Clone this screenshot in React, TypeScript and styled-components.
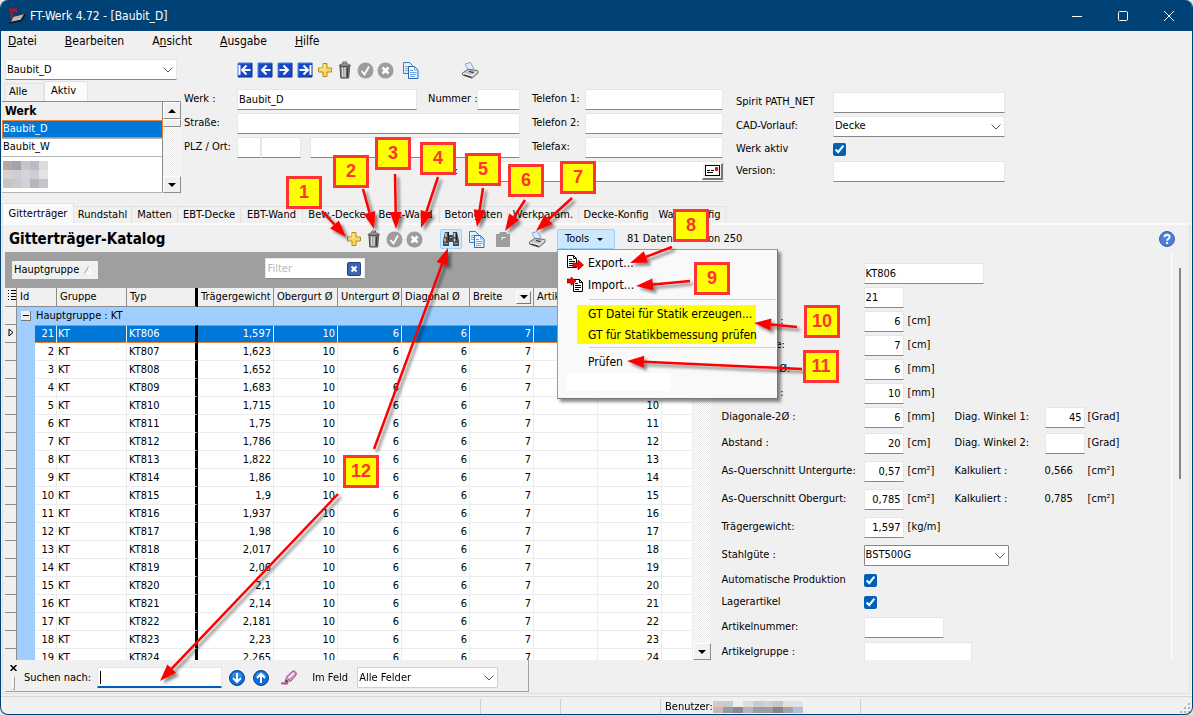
import React from "react";
import styled, { createGlobalStyle, css } from "styled-components";

const font = `"DejaVu Sans Condensed", "DejaVu Sans", "Noto Sans", sans-serif`;
const navy = "#004275";
const face = "#f0f0f0";

const GlobalStyle = createGlobalStyle`
  *, *::before, *::after { box-sizing: border-box; }
  body { margin: 0; background: #e4e4e4; }
  body, button, input, select, table { font-family: ${font}; font-size: 11px; line-height: 14px; color: #000; }
  button { border: 0; padding: 0; background: none; }
`;

/* ---------- window frame ---------- */

const Window = styled.div`
  position: relative;
  display: flex;
  flex-direction: column;
  height: 100vh;
  min-height: 600px;
  overflow: hidden;
  background: ${face};
  border: 1px solid ${navy};
  border-top: 0;
  border-radius: 8px;
`;

const TitleBar = styled.header`
  display: flex;
  flex: none;
  align-items: center;
  height: 31px;
  padding-left: 7px;
  background: ${navy};
  color: #fff;
  font-size: 12px;
`;

const WindowTitle = styled.span`
  flex: 1;
  padding-left: 4px;
`;

const CaptionButton = styled.button`
  display: grid;
  place-items: center;
  width: 46px;
  height: 31px;
`;

const MenuBar = styled.nav`
  display: flex;
  flex: none;
  gap: 28px;
  height: 21px;
  padding: 1px 7px 3px;
`;

const MenuLink = styled.button`
  font-size: 12px;
  line-height: 16px;
`;

/* ---------- shared controls ---------- */

const fieldBox = css`
  height: 21px;
  border: 1px solid #e6e6e6;
  border-bottom-color: #868686;
  border-radius: 1px;
  background: #fff;
  outline: 0;
`;

const Field = styled.input<{ $w: number; $right?: boolean }>`
  ${fieldBox}
  flex: none;
  width: ${(p) => p.$w}px;
  padding: 0 2px 0 1px;
  text-align: ${(p) => (p.$right ? "right" : "left")};
`;

const SelectFrame = styled.span<{ $w: number; $edge?: string }>`
  position: relative;
  flex: none;
  width: ${(p) => p.$w}px;
  height: 21px;
  select {
    ${fieldBox}
    width: 100%;
    padding: 0 20px 0 1px;
    appearance: none;
    ${(p) => p.$edge && `border-color: ${p.$edge};`}
  }
  svg {
    position: absolute;
    right: 3px;
    top: 7px;
    pointer-events: none;
  }
`;

const Check = styled.input.attrs({ type: "checkbox" })`
  width: 13px;
  height: 13px;
  margin: 0;
  accent-color: #005fb8;
`;

const Label = styled.label<{ $w?: number }>`
  flex: none;
  white-space: nowrap;
  ${(p) => p.$w && `width: ${p.$w}px;`}
`;

const IconButton = styled.button<{ $gap?: number; $on?: boolean }>`
  display: grid;
  flex: none;
  place-items: center;
  width: 16px;
  height: 20px;
  margin-left: ${(p) => p.$gap ?? 4}px;
  ${(p) =>
    p.$on &&
    `width: 22px; background: #cce8ff; border: 1px solid #99d1ff; border-radius: 2px;`}
`;

/* ---------- plant header ---------- */

const PlantArea = styled.section`
  display: flex;
  flex: none;
  height: 150px;
  padding-left: 1px;
`;

const PlantList = styled.div`
  width: 182px;
  padding: 7px 3px 0 0;
`;

const ComboLine = styled.div`
  display: flex;
  padding-left: 3px;
`;

const SmallTabs = styled.div`
  display: flex;
  align-items: flex-end;
  height: 21px;
  padding-left: 2px;
`;

const SmallTab = styled.button<{ $active?: boolean }>`
  width: ${(p) => (p.$active ? 44 : 40)}px;
  height: ${(p) => (p.$active ? 20 : 18)}px;
  padding: 0 0 2px ${(p) => (p.$active ? 6 : 4)}px;
  text-align: left;
  background: ${(p) => (p.$active ? "#fafafa" : face)};
  border: 1px solid #e2e2e2;
  border-bottom: 0;
`;

const ListBox = styled.div`
  display: flex;
  height: 92px;
  border-top: 1px solid #8c8c8c;
`;

const ListTable = styled.table`
  flex: 1;
  border-collapse: collapse;
  th {
    height: 18px;
    padding: 0 3px;
    text-align: left;
    font-size: 12px;
    background: ${face};
    border-bottom: 1px solid #8c8c8c;
    border-right: 1px solid #8c8c8c;
  }
  td {
    height: 18px;
    padding: 0 1px;
    background: #fff;
    border-bottom: 1px solid #b4b4b4;
    border-right: 1px solid #8c8c8c;
  }
`;

const SelectedCell = styled.td`
  && {
    background: #0078d7;
    color: #fff;
    outline: 1px solid #f08030;
    outline-offset: -1px;
  }
`;

const HiddenCell = styled.td`
  && {
    padding-top: 4px;
    vertical-align: top;
  }
`;

const Mosaic = styled.span<{ $cols: number; $cell: number; $h: number }>`
  display: grid;
  width: max-content;
  grid-template-columns: repeat(${(p) => p.$cols}, ${(p) => p.$cell}px);
  i {
    height: ${(p) => p.$h}px;
  }
`;

const ScrollTrack = styled.div<{ $w: number }>`
  display: flex;
  flex: none;
  flex-direction: column;
  justify-content: space-between;
  width: ${(p) => p.$w}px;
  background: repeating-conic-gradient(#e9e9e9 0 25%, #fff 0 50%) 0 0 / 2px 2px;
`;

const ScrollButton = styled.button`
  display: grid;
  place-items: center;
  height: 17px;
  background: ${face};
  border: 1px solid #fff;
  border-right-color: #8c8c8c;
  border-bottom-color: #8c8c8c;
`;

const ScrollThumb = styled.div`
  height: 8px;
  margin-bottom: auto;
  background: ${face};
  border: 1px solid #fff;
  border-right-color: #8c8c8c;
  border-bottom-color: #8c8c8c;
`;

const PlantForm = styled.div`
  width: 540px;
`;

const PlantTools = styled.div`
  display: flex;
  height: 35px;
  padding: 8px 0 0 49px;
`;

const FormLine = styled.div`
  display: flex;
  align-items: center;
  height: 24px;
`;

const Gap = styled.span<{ $w: number }>`
  flex: none;
  width: ${(p) => p.$w}px;
`;

const MailLine = styled(FormLine)`
  justify-content: flex-end;
  gap: 9px;
`;

const MailBox = styled.span`
  ${fieldBox}
  display: flex;
  align-items: center;
  width: 257px;
  input {
    flex: 1;
    min-width: 0;
    border: 0;
    outline: 0;
  }
`;

const MailButton = styled.button`
  width: 21px;
  height: 17px;
  background: ${face};
  border: 1px solid #fff;
  border-right: 2px solid #777;
  border-bottom: 2px solid #777;
  display: grid;
  place-items: center;
`;

const SpiritForm = styled.div`
  padding: 38px 0 0 12px;
`;

const SpiritLine = styled(FormLine)`
  height: 22px;
`;

/* ---------- main tabs and catalogue ---------- */

const Tabs = styled.div`
  display: flex;
  flex: none;
  align-items: flex-end;
  height: 21px;
  padding-left: 1px;
`;

const Tab = styled.button<{ $w: number; $active?: boolean }>`
  flex: none;
  width: ${(p) => p.$w}px;
  height: ${(p) => (p.$active ? 20 : 17)}px;
  white-space: nowrap;
  border: 1px solid #e2e2e2;
  border-left-width: ${(p) => (p.$active ? 1 : 0)}px;
  border-bottom: 0;
  background: ${(p) => (p.$active ? "#fafafa" : face)};
`;

const Panel = styled.main`
  display: flex;
  flex: 1;
  flex-direction: column;
  min-height: 0;
  margin: 0 2px 2px 1px;
  border: 1px solid #dfdfdf;
  border-top: 2px solid #fafafa;
`;

const PanelHead = styled.div`
  display: flex;
  flex: none;
  align-items: center;
  height: 27px;
  padding: 1px 14px 0 6px;
`;

const Heading = styled.h1`
  flex: none;
  width: 333px;
  margin: 0;
  font-size: 15px;
  line-height: 20px;
`;

const RecordCount = styled.span`
  flex: 1;
  padding-left: 12px;
`;

const ToolsHost = styled.div`
  position: relative;
  margin-left: 12px;
`;

const ToolsButton = styled.button`
  display: flex;
  align-items: center;
  justify-content: space-between;
  width: 58px;
  height: 20px;
  padding: 0 11px 0 7px;
  background: #cce8ff;
  border: 1px solid #99d1ff;
  border-radius: 2px;
`;

const Popup = styled.div`
  position: absolute;
  z-index: 2;
  left: 0;
  top: 20px;
  width: 221px;
  height: 150px;
  padding: 2px 1px;
  background: #f9f9f9;
  border: 1px solid #9a9a9a;
  border-right-color: #777;
  border-bottom-color: #777;
  box-shadow: 3px 3px 3px rgba(0, 0, 0, 0.45);
`;

const PopupItem = styled.button`
  display: flex;
  align-items: center;
  width: 100%;
  height: 22px;
  font-size: 12px;
  white-space: nowrap;
`;

const PopupIcon = styled.span`
  width: 29px;
  height: 17px;
  padding-left: 4px;
`;

const PopupRule = styled.hr`
  height: 1px;
  margin: 3px 0 3px 30px;
  border: 0;
  background: #cfcfcf;
`;

const Marked = styled.div`
  display: flex;
  flex-direction: column;
  gap: 4px;
  width: 179px;
  height: 39px;
  margin: 5px 0 3px 18px;
  background: #ff0;
  button {
    height: 17px;
    padding-left: 11px;
  }
`;

const PopupBlank = styled.div`
  width: 104px;
  height: 18px;
  margin: 0 8px;
  background: #fff;
`;

const Split = styled.div`
  display: grid;
  flex: 1;
  grid-template-columns: 705fr 461fr 17px;
  min-height: 0;
  padding-left: 2px;
`;

const GridSide = styled.div`
  display: flex;
  flex-direction: column;
  min-width: 0;
  min-height: 0;
`;

const GroupBand = styled.div`
  display: flex;
  flex: none;
  align-items: flex-start;
  justify-content: space-between;
  height: 36px;
  padding: 6px 346px 0 7px;
  background: #9f9f9f;
`;

const GroupChip = styled.button`
  display: flex;
  align-items: center;
  justify-content: space-between;
  width: 86px;
  height: 18px;
  margin-top: 3px;
  padding: 0 5px 0 2px;
  background: ${face};
`;

const FilterBox = styled.span`
  ${fieldBox}
  display: flex;
  align-items: center;
  width: 100px;
  padding: 0 2px;
  input {
    flex: 1;
    min-width: 0;
    padding: 0;
    border: 0;
    outline: 0;
  }
  input::placeholder {
    color: #b9b9b9;
  }
`;

const GridBody = styled.div`
  display: flex;
  flex: 1;
  min-height: 0;
  overflow: hidden;
  background: #fff;
`;

const TableFrame = styled.div`
  flex: 1;
  min-width: 0;
  overflow: hidden;
`;

const DataTable = styled.table`
  width: 100%;
  table-layout: fixed;
  border-collapse: separate;
  border-spacing: 0;
  th,
  td {
    height: 18px;
    padding: 0 2px;
    overflow: hidden;
    white-space: nowrap;
  }
  th {
    height: 19px;
    padding: 0 0 0 3px;
    text-align: left;
    font-weight: normal;
    background: ${face};
    border-right: 1px solid #8c8c8c;
    border-bottom: 1px solid #8c8c8c;
  }
  td {
    text-align: right;
    border-right: 1px solid #ececec;
    border-bottom: 1px solid #ececec;
  }
`;

const Marker = styled.td`
  && {
    padding: 0;
    text-align: center;
    background: ${face};
    border-right: 1px solid #8c8c8c;
    border-bottom: 1px solid #8c8c8c;
  }
`;

const Indent = styled.td`
  && {
    background: #a0cfff;
    border: 0;
  }
`;

const GroupCell = styled.td`
  && {
    padding: 0 4px;
    text-align: left;
    background: #a0cfff;
    border: 0;
  }
`;

const GroupLabel = styled.span`
  display: flex;
  align-items: center;
  gap: 5px;
`;

const ExpandBox = styled.button`
  display: grid;
  place-items: center;
  width: 10px;
  height: 10px;
  background: ${face};
  border-right: 1px solid #777;
  border-bottom: 1px solid #777;
`;

const Row = styled.tr<{ $selected?: boolean }>`
  td:nth-child(4),
  td:nth-child(5) {
    text-align: left;
    padding-left: 1px;
  }
  td:nth-child(5) {
    padding-left: 2px;
    border-right: 3px solid #000;
  }
  ${(p) =>
    p.$selected &&
    css`
      td:nth-child(n + 3) {
        color: #fff;
        background: #0078d7;
        border-top: 1px solid #f08030;
        border-bottom-color: #f08030;
      }
    `}
`;

const FixedHead = styled.th`
  && {
    border-right: 3px solid #000;
  }
`;

const HeadFlex = styled.span`
  display: flex;
  align-items: center;
  justify-content: space-between;
  padding-right: 2px;
`;

const DropButton = styled.button`
  display: grid;
  place-items: center;
  width: 15px;
  height: 13px;
  border: 1px solid #fff;
  border-right-color: #777;
  border-bottom-color: #777;
`;

/* ---------- detail form ---------- */

const Detail = styled.form`
  min-width: 0;
  min-height: 0;
  padding: 9px 0 0 11px;
  overflow: hidden;
  border-right: 1px solid #fff;
`;

const DetailLine = styled.div<{ $h?: number }>`
  display: grid;
  grid-template-columns: 142px 44px 47px 90px 43px 1fr;
  align-items: center;
  height: ${(p) => p.$h ?? 24}px;
  white-space: nowrap;
`;

const Figure = styled.output`
  text-align: left;
`;

const SideScroll = styled.div`
  padding: 16px 0 0 7px;
`;

const SideThumb = styled.div`
  width: 2px;
  height: 211px;
  background: #858585;
`;

/* ---------- search and status ---------- */

const SearchBar = styled.div`
  display: flex;
  flex: none;
  align-items: center;
  width: 524px;
  height: 32px;
  margin: 0 0 1px 2px;
  padding-top: 4px;
  border-right: 1px solid #a0a0a0;
  border-bottom: 1px solid #a0a0a0;
`;

const Grip = styled.div`
  display: flex;
  flex-direction: column;
  align-items: center;
  gap: 5px;
  width: 16px;
  height: 26px;
  margin-right: 3px;
`;

const GripBar = styled.span`
  width: 3px;
  height: 14px;
  border: 1px solid #fff;
  border-right-color: #a0a0a0;
  border-bottom-color: #a0a0a0;
`;

const SearchField = styled(Field)`
  margin-left: 6px;
  border-bottom: 2px solid #005fb8;
  caret-color: transparent;
  &:focus {
    background: linear-gradient(#000, #000) 2px 3px / 1px 13px no-repeat #fff;
  }
`;

const StatusBar = styled.footer`
  display: flex;
  flex: none;
  height: 18px;
  padding-top: 2px;
  border-top: 1px solid #d7d7d7;
`;

const StatusCell = styled.div<{ $w?: number }>`
  display: flex;
  align-items: center;
  ${(p) => (p.$w ? `width: ${p.$w}px; border-right: 1px solid #d0d0d0;` : "flex: 1; justify-content: flex-end; align-items: flex-end;")}
  padding: 1px 0 0 4px;
`;

/* ---------- callouts ---------- */

const Callouts = styled.div`
  position: absolute;
  z-index: 3;
  inset: 0 0 0 -1px;
  pointer-events: none;
  svg {
    position: absolute;
    inset: 0;
    width: 100%;
    height: 100%;
  }
`;

const Badge = styled.span<{ $x: number; $y: number }>`
  position: absolute;
  left: ${(p) => p.$x}px;
  top: ${(p) => p.$y}px;
  width: 36px;
  height: 33px;
  border: 3px solid #ff3333;
  background: #ff0;
  color: #ff3333;
  font: bold 18px/26px "Liberation Sans", sans-serif;
  text-align: center;
`;

/* ---------- icons ---------- */

const Chevron = () => (
  <svg width="12" height="8" viewBox="0 0 12 8">
    <path d="M1.5 1.5 6 6l4.500-4.500" fill="none" stroke="#555" />
  </svg>
);
const Tri = ({ up = false }: { up?: boolean }) => (
  <svg width="8" height="4" viewBox="0 0 8 4">
    <path d={up ? "M0 4h8L4 0z" : "M0 0h8L4 4z"} fill="#000" />
  </svg>
);
const SmallTri = () => (
  <svg width="6" height="3" viewBox="0 0 6 3">
    <path d="M0 0h6L3 3z" fill="#000" />
  </svg>
);
const NavIcon = ({ kind }: { kind: "first" | "prev" | "next" | "last" }) => {
  const flip = kind === "next" || kind === "last";
  return (
    <svg width="16" height="16" viewBox="0 0 16 16">
      <rect x="1" y="1" width="14" height="14" fill="#1648c8" />
      <path d="M1 15V1h14" fill="none" stroke="#4f86ea" />
      <path d="M15 1v14H1" fill="none" stroke="#0a2c86" />
      <g transform={flip ? "matrix(-1 0 0 1 16 0)" : undefined} stroke="#fff" fill="none" strokeWidth="2">
        <path d="M13.500 8H5M9.500 3.500 5 8l4.500 4.500" />
        {(kind === "first" || kind === "last") && <path d="M2.500 3v10" />}
      </g>
    </svg>
  );
};
const PlusIcon = () => (
  <svg width="16" height="16" viewBox="0 0 16 16">
    <path d="M6 1.500h4V6h4.500v4H10v4.500H6V10H1.500V6H6z" fill="#f7dc5a" stroke="#b98a1c" />
    <path d="M7 2.500V7H2.500" fill="none" stroke="#fff6b8" />
  </svg>
);
const TrashIcon = () => (
  <svg width="16" height="18" viewBox="0 0 16 18">
    <path d="M3 5.500h9.500l-.8 11.500H3.800z" fill="#8a8a8a" stroke="#4a4a4a" />
    <path d="M5.500 6.500l.3 9.500M8 6.500v9.500" stroke="#e4e4e4" strokeWidth="1.200" />
    <path d="M10.500 6.500l-.3 9.500" stroke="#333" strokeWidth="1.400" />
    <path d="M2 5C2.500 2 13 2 13.500 5z" fill="#b5b5b5" stroke="#555" />
    <path d="M6 2.500V1h3.500v1.500" fill="none" stroke="#555" />
  </svg>
);
const DotIcon = ({ ok = false }: { ok?: boolean }) => (
  <svg width="17" height="17" viewBox="0 0 17 17">
    <circle cx="8.500" cy="8.500" r="8" fill="#9d9d9d" />
    <path d={ok ? "M4.500 9l3 3.500L12 4.500" : "M5.500 5.500l6 6M11.500 5.500l-6 6"} fill="none" stroke="#fff" strokeWidth={ok ? 1.8 : 2.6} />
  </svg>
);
const CopyIcon = () => (
  <svg width="16" height="17" viewBox="0 0 16 17">
    <path d="M.5.5h6l3 3v8h-9z" fill="#e6f1fc" stroke="#3b78c4" />
    <path d="M2 4.500h4M2 6.500h5M2 8.500h4" stroke="#7aa9e0" />
    <path d="M5.500 4.500h6l3.500 3.500v8.500H5.500z" fill="#f2f8ff" stroke="#2c68b8" />
    <path d="M11.500 4.500V8h3.500M7 8.500h3M7 10.500h6.500M7 12.500h6.500M7 14.500h5" fill="none" stroke="#6fa2de" />
  </svg>
);
const PasteIcon = () => (
  <svg width="16" height="16" viewBox="0 0 16 16">
    <path d="M1 3h3l1-2h6l1 2h3v13H1z" fill="#9d9d9d" />
    <path d="M7 6.500h3.500M7 6v3" stroke="#f3f3f3" fill="none" />
  </svg>
);
const PrinterIcon = () => (
  <svg width="17" height="17" viewBox="0 0 17 17">
    <path d="M3 2 8.500.5l3.500 6-5.500 2z" fill="#dcebfb" stroke="#7fa9dc" />
    <path d="M.5 11 5.500 7.500 16 8.500V11l-6 5.200L.5 13z" fill="#c4c4c4" stroke="#666" />
    <path d="M1 11.500l9 2.300 5.500-4.800" fill="none" stroke="#fafafa" />
    <path d="M2 13l7.500 2.300M7 9.500l4.500 1.200" stroke="#333" strokeWidth="1.200" />
  </svg>
);
const BinocularsIcon = () => (
  <svg width="18" height="16" viewBox="0 0 18 16">
    <path d="M3 1h4v3h4V1h4l2 9v5h-6v-4H7v4H1v-5z" fill="#4a4a4a" />
    <path d="M4 2v4M3 7.500v3M12.500 2v4M12.500 7.500v3" stroke="#d6d6d6" strokeWidth="1.500" />
    <path d="M2 12.500h4M12 12.500h4M7.500 6.500h3" stroke="#9a9a9a" />
    <path d="M6.500 1v8M14.500 2v7" stroke="#1e1e1e" />
  </svg>
);
const CloseSquare = () => (
  <svg width="14" height="14" viewBox="0 0 14 14">
    <rect x=".5" y=".5" width="13" height="13" rx="1" fill="#3a64b4" stroke="#20407e" />
    <path d="M4.500 4.500l5 5M9.500 4.500l-5 5" stroke="#fff" strokeWidth="2" />
  </svg>
);
const HelpIcon = () => (
  <svg width="16" height="16" viewBox="0 0 16 16">
    <circle cx="8" cy="8" r="7.500" fill="#4a7fd4" stroke="#3564b4" />
    <path d="M5.500 6.200C5.500 3 10.600 3 10.600 6c0 1.700-2.500 1.800-2.500 3.700" fill="none" stroke="#fff" strokeWidth="1.900" />
    <rect x="7.100" y="11" width="2" height="2" fill="#fff" />
  </svg>
);
const RoundArrow = ({ up = false }: { up?: boolean }) => (
  <svg width="16" height="16" viewBox="0 0 16 16">
    <circle cx="8" cy="8" r="7.500" fill="#0d6fd6" stroke="#083f96" />
    <path d="M2.500 6.500C4 .8 12 .8 13.500 6.500" fill="#5aa9f2" opacity=".6" />
    <path d={up ? "M8 13V4M4 8l4-4 4 4" : "M8 3v9M4 8l4 4 4-4"} fill="none" stroke="#fff" strokeWidth="2" />
  </svg>
);
const MarkerPen = () => (
  <svg width="16" height="16" viewBox="0 0 16 16">
    <path d="M0 13.500c3-1 4 1 7-.5" fill="none" stroke="#d23a9c" strokeWidth="2" />
    <path d="M3.500 12.500 4.500 8.500l4 3.500z" fill="#555" />
    <path d="M5 7.500 11 1.500c2.500-1.500 5 1 4 3.500L9.500 11.500z" fill="#dd94c6" stroke="#8c4a7c" />
    <path d="M7.500 8 13 3" stroke="#fff" strokeWidth="1.300" />
  </svg>
);
const CraneIcon = () => (
  <svg width="18" height="17" viewBox="0 0 18 17">
    <path d="M5 9.500l12-3-4 7-11 2.500z" fill="#b8b8b8" stroke="#333" />
    <path d="M1 16l12-2.500 4-6" fill="none" stroke="#111" strokeWidth="1.500" />
    <path d="M3.500 11V2M1 2.500h7V5M4 5l3-2" fill="none" stroke="#c01020" strokeWidth="2" />
  </svg>
);
const SheetIcon = ({ incoming = false }: { incoming?: boolean }) => (
  <svg width="17" height="16" viewBox="0 0 17 16">
    <g transform={incoming ? "translate(6 2)" : "translate(0 0)"}>
      <path d="M.5.5h6l3 3v9h-9z" fill="#fff" stroke="#000" />
      <path d="M6.500.5v3h3M2 4.500h3M2 6.500h6M2 8.500h6M2 10.500h4" fill="none" stroke="#000" />
    </g>
    <path d={incoming ? "M0 2h4V0l5 4-5 4.500V6H0z" : "M6 8h5V5l5.500 5-5.500 5v-3H6z"} fill="#f00" stroke="#600" strokeWidth=".6" />
  </svg>
);
const MailIcon = () => (
  <svg width="15" height="11" viewBox="0 0 15 11">
    <rect x=".5" y=".5" width="14" height="10" fill="#fff" stroke="#000" />
    <path d="M2 5.500h3M6 5.500h3M2 7.500h6" stroke="#000" />
    <rect x="10" y="2" width="3" height="4" rx="1" fill="#f00" />
  </svg>
);

/* ---------- data ---------- */

const weights = ["1,597", "1,623", "1,652", "1,683", "1,715", "1,75", "1,786", "1,822", "1,86", "1,9", "1,937", "1,98", "2,017", "2,06", "2,1", "2,14", "2,181", "2,23", "2,265"];
const girders = weights.map((weight, i) => ({
  id: i === 0 ? 21 : i + 1,
  typ: `KT8${String(i + 6).padStart(2, "0")}`,
  weight,
  height: i + 6,
}));

const tabs: [string, number][] = [
  ["Gitterträger", 72], ["Rundstahl", 58], ["Matten", 46], ["EBT-Decke", 63], ["EBT-Wand", 62], ["Bew.-Decke", 69],
  ["Bew.-Wand", 68], ["Betongüten", 68], ["Werkparam.", 71], ["Decke-Konfig", 75], ["Wand-Konfig", 72],
];

const badges = [
  [286, 176], [333, 155], [375, 137], [420, 142], [465, 153], [508, 164],
  [560, 161], [673, 209], [694, 262], [804, 305], [803, 350], [343, 455],
];

const arrows = [
  [322, 211, 346, 237], [363, 189, 374, 229], [395, 174, 396, 229], [438, 177, 421, 228], [483, 188, 477, 227],
  [525, 200, 505, 231], [572, 198, 536, 231], [672, 247, 630, 263], [690, 281, 636, 286], [797, 327, 754, 323],
  [802, 369, 627, 361], [374, 449, 448, 248], [338, 494, 160, 681],
];

const Arrow = ({ at: [x1, y1, x2, y2] }: { at: number[] }) => {
  const len = Math.hypot(x2 - x1, y2 - y1);
  const ux = (x2 - x1) / len;
  const uy = (y2 - y1) / len;
  const bx = x2 - ux * 17;
  const by = y2 - uy * 17;
  return (
    <g>
      <line x1={x1} y1={y1} x2={bx} y2={by} stroke="#f00" strokeWidth="2.500" />
      <path d={`M${x2} ${y2}L${bx - uy * 6} ${by + ux * 6}L${bx + uy * 6} ${by - ux * 6}z`} fill="#f00" />
    </g>
  );
};

const hiddenName = ["#b4a8a4", "#a2a2a8", "#c4c6ca", "#bcb8c4", "#d8dcdc", "#dccfcb", "#cccfd4", "#d4d4dc", "#cfcdd6", "#e2e4e4", "#c8c4c4", "#c9c9cb", "#cfd2dc", "#b4b6be", "#c4c6cc"];
const hiddenUser = ["#d8c8c4", "#c4ccd4", "#eeeeee", "#dcdcd8", "#c8ccd2", "#d4d0d0", "#c4c8cc", "#e6dfda", "#dde4ee", "#cbb8b2", "#9a9a9e", "#8c8890", "#b8b4b8", "#9c9ca4", "#a09ca0", "#8a8488", "#a4a4a8", "#b8bcd0"];

type LineProps = { id: string; label: string; value: string; unit?: string; h?: number; children?: React.ReactNode };
const NumberLine = ({ id, label, value, unit, h, children }: LineProps) => (
  <DetailLine $h={h}>
    <Label htmlFor={id}>{label}</Label>
    <Field id={id} $w={40} $right defaultValue={value} />
    <span>{unit}</span>
    {children}
  </DetailLine>
);

export default function App() {
  return (
    <>
      <GlobalStyle />
      <Window>
        <TitleBar>
          <CraneIcon />
          <WindowTitle>FT-Werk 4.72 - [Baubit_D]</WindowTitle>
          <CaptionButton aria-label="Minimieren">
            <svg width="10" height="10"><path d="M0 5.500h10" stroke="#fff" /></svg>
          </CaptionButton>
          <CaptionButton aria-label="Maximieren">
            <svg width="10" height="10"><rect x=".5" y=".5" width="9" height="9" rx="1" fill="none" stroke="#fff" /></svg>
          </CaptionButton>
          <CaptionButton aria-label="Schließen">
            <svg width="10" height="10"><path d="M0 0l10 10M10 0 0 10" stroke="#fff" /></svg>
          </CaptionButton>
        </TitleBar>

        <MenuBar>
          <MenuLink><u>D</u>atei</MenuLink>
          <MenuLink><u>B</u>earbeiten</MenuLink>
          <MenuLink>A<u>n</u>sicht</MenuLink>
          <MenuLink><u>A</u>usgabe</MenuLink>
          <MenuLink><u>H</u>ilfe</MenuLink>
        </MenuBar>

        <PlantArea>
          <PlantList>
            <ComboLine>
              <SelectFrame $w={172}>
                <select aria-label="Werk wählen"><option>Baubit_D</option></select>
                <Chevron />
              </SelectFrame>
            </ComboLine>
            <SmallTabs>
              <SmallTab>Alle</SmallTab>
              <SmallTab $active>Aktiv</SmallTab>
            </SmallTabs>
            <ListBox>
              <ListTable>
                <thead><tr><th>Werk</th></tr></thead>
                <tbody>
                  <tr><SelectedCell>Baubit_D</SelectedCell></tr>
                  <tr><td>Baubit_W</td></tr>
                  <tr>
                    <HiddenCell rowSpan={2}>
                      <Mosaic $cols={5} $cell={9} $h={9}>{hiddenName.map((c, i) => <i key={i} style={{ background: c }} />)}</Mosaic>
                    </HiddenCell>
                  </tr>
                  <tr />
                </tbody>
              </ListTable>
              <ScrollTrack $w={18}>
                <ScrollButton aria-label="Nach oben"><Tri up /></ScrollButton>
                <ScrollThumb />
                <ScrollButton aria-label="Nach unten"><Tri /></ScrollButton>
              </ScrollTrack>
            </ListBox>
          </PlantList>

          <PlantForm>
            <PlantTools>
              <IconButton aria-label="Erster"><NavIcon kind="first" /></IconButton>
              <IconButton aria-label="Zurück"><NavIcon kind="prev" /></IconButton>
              <IconButton aria-label="Weiter"><NavIcon kind="next" /></IconButton>
              <IconButton aria-label="Letzter"><NavIcon kind="last" /></IconButton>
              <IconButton aria-label="Neu"><PlusIcon /></IconButton>
              <IconButton aria-label="Löschen"><TrashIcon /></IconButton>
              <IconButton aria-label="Übernehmen"><DotIcon ok /></IconButton>
              <IconButton aria-label="Verwerfen"><DotIcon /></IconButton>
              <IconButton aria-label="Kopieren" $gap={10}><CopyIcon /></IconButton>
              <IconButton aria-label="Drucken" $gap={43}><PrinterIcon /></IconButton>
            </PlantTools>
            <FormLine>
              <Label htmlFor="werk" $w={53}>Werk :</Label>
              <Field id="werk" $w={180} defaultValue="Baubit_D" />
              <Gap $w={11} />
              <Label htmlFor="nummer" $w={49}>Nummer :</Label>
              <Field id="nummer" $w={43} />
              <Gap $w={12} />
              <Label htmlFor="tel1" $w={53}>Telefon 1:</Label>
              <Field id="tel1" $w={138} />
            </FormLine>
            <FormLine>
              <Label htmlFor="strasse" $w={53}>Straße:</Label>
              <Field id="strasse" $w={283} />
              <Gap $w={12} />
              <Label htmlFor="tel2" $w={53}>Telefon 2:</Label>
              <Field id="tel2" $w={138} />
            </FormLine>
            <FormLine>
              <Label htmlFor="plz" $w={53}>PLZ / Ort:</Label>
              <Field aria-label="Land" $w={24} />
              <Field id="plz" $w={40} />
              <Gap $w={9} />
              <Field aria-label="Ort" $w={210} />
              <Gap $w={12} />
              <Label htmlFor="fax" $w={53}>Telefax:</Label>
              <Field id="fax" $w={138} />
            </FormLine>
            <MailLine>
              <Label htmlFor="mail">E-Mail:</Label>
              <MailBox>
                <input id="mail" />
                <MailButton aria-label="Mail senden"><MailIcon /></MailButton>
              </MailBox>
            </MailLine>
          </PlantForm>

          <SpiritForm>
            <FormLine>
              <Label htmlFor="spirit" $w={97}>Spirit PATH_NET</Label>
              <Field id="spirit" $w={172} />
            </FormLine>
            <FormLine>
              <Label htmlFor="cad" $w={97}>CAD-Vorlauf:</Label>
              <SelectFrame $w={172}>
                <select id="cad"><option>Decke</option></select>
                <Chevron />
              </SelectFrame>
            </FormLine>
            <SpiritLine>
              <Label htmlFor="aktiv" $w={97}>Werk aktiv</Label>
              <Check id="aktiv" defaultChecked />
            </SpiritLine>
            <SpiritLine>
              <Label htmlFor="version" $w={97}>Version:</Label>
              <Field id="version" $w={172} />
            </SpiritLine>
          </SpiritForm>
        </PlantArea>

        <Tabs>
          {tabs.map(([name, w], i) => <Tab key={name} $w={w} $active={i === 0}>{name}</Tab>)}
        </Tabs>

        <Panel>
          <PanelHead>
            <Heading>Gitterträger-Katalog</Heading>
            <IconButton aria-label="Neu"><PlusIcon /></IconButton>
            <IconButton aria-label="Löschen"><TrashIcon /></IconButton>
            <IconButton aria-label="Übernehmen"><DotIcon ok /></IconButton>
            <IconButton aria-label="Verwerfen"><DotIcon /></IconButton>
            <IconButton aria-label="Suchen" $gap={18} $on><BinocularsIcon /></IconButton>
            <IconButton aria-label="Kopieren" $gap={7}><CopyIcon /></IconButton>
            <IconButton aria-label="Einfügen" $gap={10}><PasteIcon /></IconButton>
            <IconButton aria-label="Drucken" $gap={18}><PrinterIcon /></IconButton>
            <ToolsHost>
              <ToolsButton>Tools <SmallTri /></ToolsButton>
              <Popup>
                <PopupItem><PopupIcon><SheetIcon /></PopupIcon>Export...</PopupItem>
                <PopupItem><PopupIcon><SheetIcon incoming /></PopupIcon>Import...</PopupItem>
                <PopupRule />
                <Marked>
                  <PopupItem>GT Datei für Statik erzeugen...</PopupItem>
                  <PopupItem>GT für Statikbemessung prüfen</PopupItem>
                </Marked>
                <PopupRule />
                <PopupItem><PopupIcon />Prüfen</PopupItem>
                <PopupBlank />
              </Popup>
            </ToolsHost>
            <RecordCount>81 Datensätze von 250</RecordCount>
            <IconButton aria-label="Hilfe"><HelpIcon /></IconButton>
          </PanelHead>

          <Split>
            <GridSide>
              <GroupBand>
                <GroupChip>
                  Hauptgruppe
                  <svg width="9" height="8"><path d="M.5 7.500 4.500.5l4 7z" fill="none" stroke="#fff" /><path d="M.5 7.500 4.500.5" stroke="#999" /></svg>
                </GroupChip>
                <FilterBox>
                  <input aria-label="Filter" placeholder="Filter" />
                  <IconButton aria-label="Filter löschen"><CloseSquare /></IconButton>
                </FilterBox>
              </GroupBand>
              <GridBody>
                <TableFrame>
                  <DataTable>
                    <colgroup>
                      {[12, 18, 22, 70, 71, 76, 64, 64, 68, 64, 64, 64].map((w, i) => <col key={i} style={{ width: w }} />)}
                      <col />
                    </colgroup>
                    <thead>
                      <tr>
                        <th><svg width="8" height="10"><path d="M0 .5h1M3 .5h5M0 3.500h1M3 3.500h5M0 6.500h1M3 6.500h5M0 9.500h1M3 9.500h5" stroke="#000" /></svg></th>
                        <th colSpan={2}>Id</th>
                        <th>Gruppe</th>
                        <FixedHead>Typ</FixedHead>
                        <th>Trägergewicht</th>
                        <th>Obergurt Ø</th>
                        <th>Untergurt Ø</th>
                        <th>Diagonal Ø</th>
                        <th><HeadFlex>Breite<DropButton aria-label="Breite filtern"><Tri /></DropButton></HeadFlex></th>
                        <th>Artikelnr.</th>
                        <th>Höhe</th>
                        <th />
                      </tr>
                    </thead>
                    <tbody>
                      <tr>
                        <Marker />
                        <GroupCell colSpan={12}>
                          <GroupLabel>
                            <ExpandBox aria-label="Zuklappen"><svg width="6" height="1"><path d="M0 .5h6" stroke="#000" /></svg></ExpandBox>
                            Hauptgruppe : KT
                          </GroupLabel>
                        </GroupCell>
                      </tr>
                      {girders.map((g, i) => (
                        <Row key={g.typ} $selected={i === 0}>
                          <Marker>{i === 0 && <svg width="6" height="9"><path d="M1 1v7l4-3.500z" fill="none" stroke="#000" /></svg>}</Marker>
                          <Indent />
                          <td>{g.id}</td>
                          <td>KT</td>
                          <td>{g.typ}</td>
                          <td>{g.weight}</td>
                          <td>10</td>
                          <td>6</td>
                          <td>6</td>
                          <td>7</td>
                          <td />
                          <td>{g.height}</td>
                          <td />
                        </Row>
                      ))}
                    </tbody>
                  </DataTable>
                </TableFrame>
                <ScrollTrack $w={18}>
                  <ScrollButton aria-label="Nach oben"><Tri up /></ScrollButton>
                  <ScrollButton aria-label="Nach unten"><Tri /></ScrollButton>
                </ScrollTrack>
              </GridBody>
            </GridSide>

            <Detail>
              <DetailLine>
                <Label htmlFor="typ">Typ :</Label>
                <Field id="typ" $w={120} defaultValue="KT806" />
              </DetailLine>
              <DetailLine>
                <Label htmlFor="id">Id :</Label>
                <Field id="id" $w={40} defaultValue="21" />
              </DetailLine>
              <NumberLine id="hoehe" label="Trägerhöhe :" value="6" unit="[cm]" />
              <NumberLine id="breite" label="Trägerbreite:" value="7" unit="[cm]" />
              <NumberLine id="untergurt" label="Untergurt - Ø:" value="6" unit="[mm]" />
              <NumberLine id="obergurt" label="Obergurt Ø :" value="10" unit="[mm]" />
              <NumberLine id="diag2" label="Diagonale-2Ø :" value="6" unit="[mm]">
                <Label htmlFor="winkel1">Diag. Winkel 1:</Label>
                <Field id="winkel1" $w={40} $right defaultValue="45" />
                <span>[Grad]</span>
              </NumberLine>
              <NumberLine id="abstand" label="Abstand :" value="20" unit="[cm]" h={28}>
                <Label htmlFor="winkel2">Diag. Winkel 2:</Label>
                <Field id="winkel2" $w={40} $right />
                <span>[Grad]</span>
              </NumberLine>
              <NumberLine id="asu" label="As-Querschnitt Untergurte:" value="0,57" unit="[cm²]" h={28}>
                <span>Kalkuliert :</span>
                <Figure>0,566</Figure>
                <span>[cm²]</span>
              </NumberLine>
              <NumberLine id="aso" label="As-Querschnitt Obergurt:" value="0,785" unit="[cm²]" h={28}>
                <span>Kalkuliert :</span>
                <Figure>0,785</Figure>
                <span>[cm²]</span>
              </NumberLine>
              <NumberLine id="gewicht" label="Trägergewicht:" value="1,597" unit="[kg/m]" h={28} />
              <DetailLine $h={28}>
                <Label htmlFor="stahl">Stahlgüte :</Label>
                <SelectFrame $w={145} $edge="#868686">
                  <select id="stahl"><option>BST500G</option></select>
                  <Chevron />
                </SelectFrame>
              </DetailLine>
              <DetailLine $h={22}>
                <Label htmlFor="auto">Automatische Produktion</Label>
                <Check id="auto" defaultChecked />
              </DetailLine>
              <DetailLine $h={22}>
                <Label htmlFor="lager">Lagerartikel</Label>
                <Check id="lager" defaultChecked />
              </DetailLine>
              <DetailLine $h={28}>
                <Label htmlFor="artnr">Artikelnummer:</Label>
                <Field id="artnr" $w={80} />
              </DetailLine>
              <DetailLine $h={22}>
                <Label htmlFor="artgr">Artikelgruppe :</Label>
                <Field id="artgr" $w={108} />
              </DetailLine>
            </Detail>
            <SideScroll><SideThumb /></SideScroll>
          </Split>

          <SearchBar>
            <Grip>
              <svg width="7" height="6"><path d="M.5 0l6 6M6.500 0l-6 6" stroke="#000" strokeWidth="1.500" /></svg>
              <GripBar />
            </Grip>
            <Label htmlFor="suche">Suchen nach:</Label>
            <SearchField id="suche" $w={125} autoFocus />
            <IconButton aria-label="Abwärts suchen" $gap={7}><RoundArrow /></IconButton>
            <IconButton aria-label="Aufwärts suchen" $gap={8}><RoundArrow up /></IconButton>
            <IconButton aria-label="Markieren" $gap={12}><MarkerPen /></IconButton>
            <Gap $w={15} />
            <Label htmlFor="feld" $w={45}>Im Feld</Label>
            <SelectFrame $w={141} $edge="#d0d0d0">
              <select id="feld"><option>Alle Felder</option></select>
              <Chevron />
            </SelectFrame>
          </SearchBar>
        </Panel>

        <StatusBar>
          <StatusCell $w={480} />
          <StatusCell $w={80} />
          <StatusCell $w={100} />
          <StatusCell $w={200}>
            Benutzer:
            <Mosaic $cols={9} $cell={10} $h={6}>{hiddenUser.map((c, i) => <i key={i} style={{ background: c }} />)}</Mosaic>
          </StatusCell>
          <StatusCell>
            <svg width="12" height="12"><path d="M8 2h2M8 6h2M4 6h2M8 10h2M4 10h2M0 10h2" stroke="#b0b0b0" strokeWidth="2" /></svg>
          </StatusCell>
        </StatusBar>

        <Callouts aria-hidden="true">
          <svg>
            <defs>
              <filter id="shade" filterUnits="userSpaceOnUse" x="0" y="0" width="100%" height="100%">
                <feDropShadow dx="3" dy="3" stdDeviation="1.500" floodColor="#000" floodOpacity=".45" />
              </filter>
            </defs>
            <g filter="url(#shade)">{arrows.map((a, i) => <Arrow key={i} at={a} />)}</g>
          </svg>
          {badges.map(([x, y], i) => <Badge key={i} $x={x} $y={y}>{i + 1}</Badge>)}
        </Callouts>
      </Window>
    </>
  );
}
